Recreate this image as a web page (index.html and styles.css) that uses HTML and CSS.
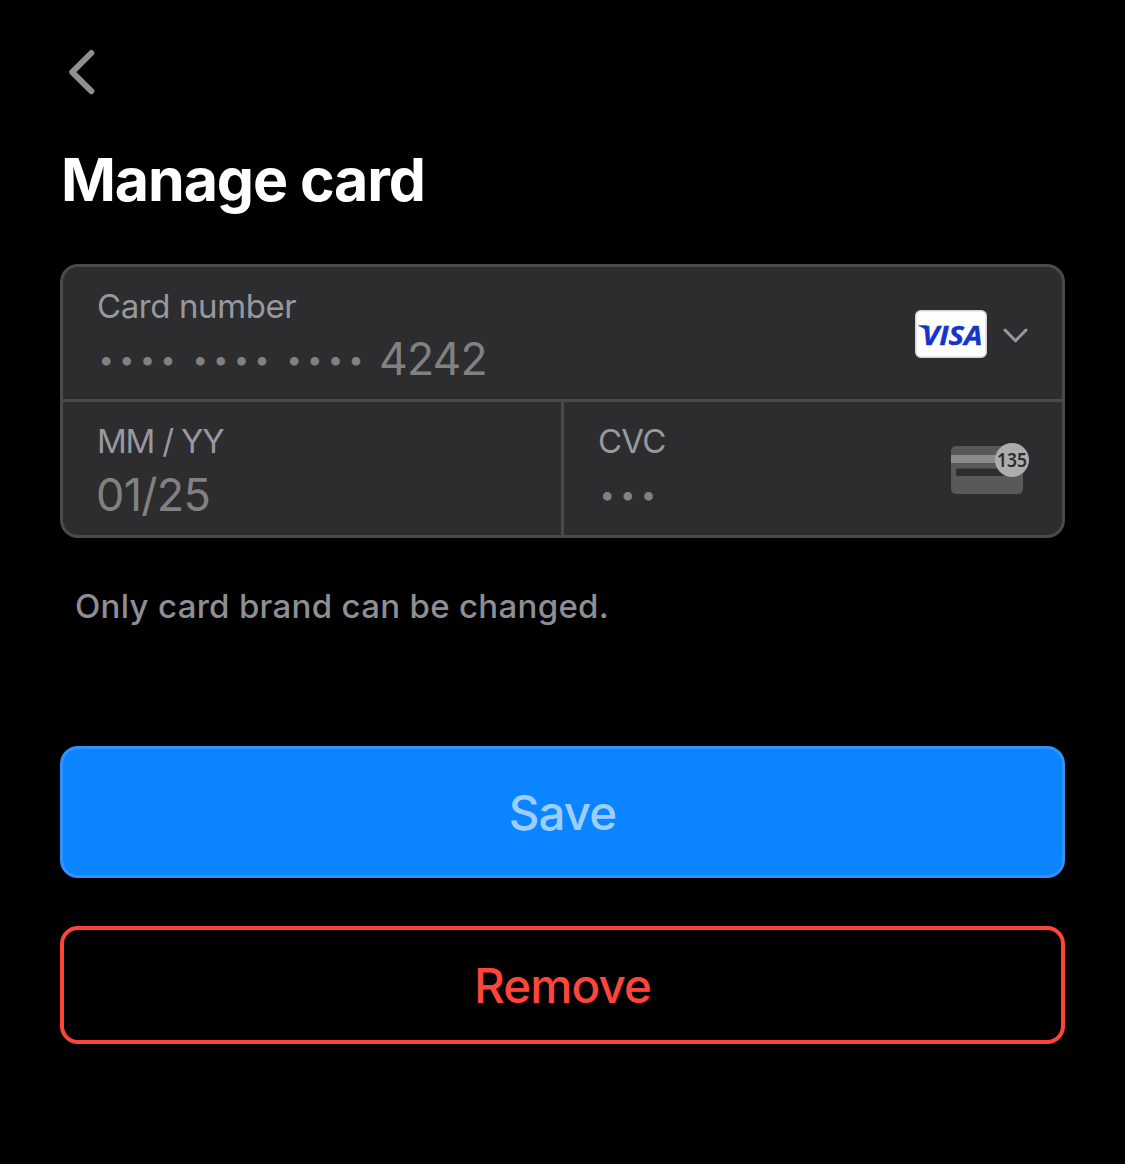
FILE: index.html
```html
<!DOCTYPE html>
<html lang="en">
<head>
<meta charset="utf-8">
<title>Manage card</title>
<link rel="stylesheet" href="styles.css">
</head>
<body>
<main class="sheet">
  <button class="back" aria-label="Back">
    <svg width="30" height="48" viewBox="0 0 30 48" fill="none"><path d="M26.3 5 7.2 24.1 26.3 43.200" stroke="#8e8e93" stroke-width="6" stroke-linecap="round" stroke-linejoin="round"/></svg>
  </button>
  <h1 class="title">Manage card</h1>
  <section class="card-form">
    <div class="field field-number">
      <div class="field-text">
        <div class="label label-number">Card number</div>
        <div class="value"><span class="dots">••••</span><span class="dots">••••</span><span class="dots">••••</span><span class="last4">4242</span></div>
      </div>
      <div class="brand">
        <svg width="72" height="48" viewBox="0 0 72 48">
          <rect x=".75" y=".75" width="70.5" height="46.5" rx="5" fill="#fff" stroke="#d4d4d6" stroke-width="1.5"/>
          <path d="M3.300 15.200H11.500L13.500 25C11.500 20 8 17 3.300 15.900z" fill="#1434cb"/>
          <text class="visa" x="7" y="34.500" textLength="60.500" lengthAdjust="spacingAndGlyphs">VISA</text>
        </svg>
        <svg class="chevron" width="26" height="16" viewBox="0 0 26 16" fill="none"><path d="M2 2 12.500 12.800 23 2" stroke="#98989f" stroke-width="3" stroke-linecap="round" stroke-linejoin="round"/></svg>
      </div>
    </div>
    <div class="row">
      <div class="field field-expiry">
        <div class="field-text">
          <div class="label label-expiry">MM / YY</div>
          <div class="value expiry">01/25</div>
        </div>
      </div>
      <div class="field field-cvc">
        <div class="field-text">
          <div class="label label-cvc">CVC</div>
          <div class="value"><span class="dots">•••</span></div>
        </div>
        <svg class="cvc-icon" width="80" height="54" viewBox="0 0 80 54">
          <rect x="0" y="4" width="72" height="48" rx="5" fill="#59595b"/>
          <path d="M0 13h60v8H0z" fill="#8b8b8c"/>
          <rect x="5" y="26.500" width="60" height="7.500" rx="2" fill="#2d2d2f"/>
          <circle cx="61" cy="18" r="17" fill="#acacad"/>
          <text class="cvc-digits" x="46" y="25" textLength="30" lengthAdjust="spacingAndGlyphs">135</text>
        </svg>
      </div>
    </div>
  </section>
  <p class="note">Only card brand can be changed.</p>
  <button class="btn save"><span>Save</span></button>
  <button class="btn remove"><span>Remove</span></button>
</main>
</body>
</html>
```
FILE: styles.css
```css
* { box-sizing: border-box; }
body { margin: 0; background: #000; font-family: Inter, "Liberation Sans", sans-serif; font-feature-settings: "calt" 0; }
button { font: inherit; font-feature-settings: inherit; padding: 0; border: 0; background: none; }
svg { display: block; flex: none; }
.sheet { display: flex; flex-direction: column; width: 1125px; height: 1164px; padding: 48px 60px 0; }
.back { align-self: flex-start; width: 30px; height: 48px; margin-left: 5px; }
.title { margin: 48px 0 0 1px; height: 72px; line-height: 72px; font-size: 59px; font-weight: 700; letter-spacing: -1.1px; color: #fff; white-space: nowrap; }
.card-form { margin-top: 48px; height: 274px; border: 3px solid #4a4a4c; border-radius: 18px; background: #2d2d2f; overflow: hidden; }
.field { display: flex; justify-content: space-between; padding: 18px 31px 0 34px; height: 133px; }
.field-number { height: 135px; padding-right: 33px; border-bottom: 3px solid #4a4a4c; }
.row { display: grid; grid-template-columns: 501px 1fr; }
.field-expiry { border-right: 3px solid #4a4a4c; }
.label { height: 42px; line-height: 42px; font-size: 33px; letter-spacing: -.4px; color: #98989f; white-space: nowrap; }
.label-expiry { letter-spacing: -1.2px; }
.label-cvc { letter-spacing: -.8px; }
.value { display: flex; height: 60px; line-height: 62px; font-size: 44px; color: #818181; white-space: nowrap; }
.dots { width: 94px; padding-left: 1.5px; font-size: 27.5px; line-height: 64px; letter-spacing: 5.1px; }
.last4 { font-size: 44.5px; line-height: 64px; letter-spacing: -.8px; }
.expiry { margin-left: -1px; font-size: 45px; line-height: 66px; letter-spacing: -.7px; }
.brand { display: flex; align-items: center; gap: 16px; height: 48px; margin-top: 25px; }
.chevron { margin-top: 4px; }
.visa { font: italic 700 27px "Open Sans", sans-serif; fill: #1434cb; stroke: #1434cb; stroke-width: .4px; }
.cvc-icon { margin: 22px 0 0; }
.cvc-digits { font: 600 20px "Noto Sans", sans-serif; fill: #2d2d2f; }
.note { margin: 45px 0 0 15px; height: 46px; line-height: 46px; font-size: 33px; font-weight: 450; letter-spacing: .3px; color: #8e8e93; white-space: nowrap; }
.btn { height: 132px; margin-top: 117px; border-radius: 18px; font-size: 47.5px; font-weight: 500; letter-spacing: -.9px; }
.save { border: 3px solid #2f92fd; background: #0a84ff; color: #9dceff; }
.remove { height: 118px; margin-top: 48px; border: 4.500px solid #ff453a; color: #ff453a; }
```
